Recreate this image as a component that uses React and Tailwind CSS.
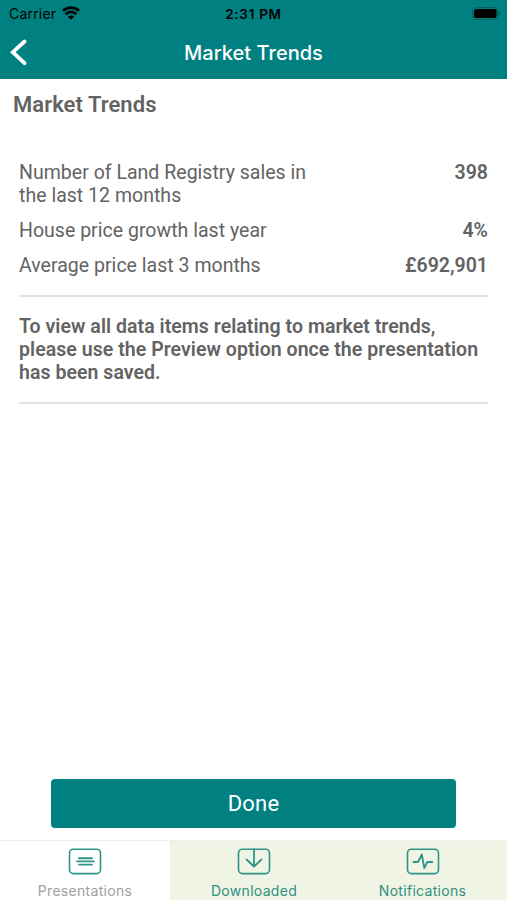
import React from 'react'

const stats = [
  { label: 'Number of Land Registry sales in the last 12 months', value: '398' },
  { label: 'House price growth last year', value: '4%' },
  { label: 'Average price last 3 months', value: '£692,901' },
]

function TabIcon({ children }) {
  return (
    <svg width="34" height="27" viewBox="0 0 34 27" fill="none" stroke="#2f9488" strokeWidth="1.6" strokeLinecap="round" strokeLinejoin="round">
      <rect x="1.5" y="1.2" width="31" height="24.4" rx="3.8" />
      {children}
    </svg>
  )
}

const tabs = [
  { label: 'Presentations', active: true, icon: <path d="M11 10.2h13M9.2 13.4h16.6M11 16.6h13" strokeWidth="1.9" /> },
  { label: 'Downloaded', icon: <path d="M17 1.2v17.2M9.5 11.5l7.5 7 7.5-7" strokeWidth="1.8" /> },
  { label: 'Notifications', icon: <path d="M7.5 14H12l3.8-7.5L18.3 20l3-6h5" strokeWidth="1.8" /> },
]

function StatusBar() {
  return (
    <div className="grid grid-cols-3 h-[27px] items-center text-black text-[14px] leading-[26px]">
      <div className="flex items-center pl-[9px] gap-[6px]">
        <span className="tracking-[0.2px]">Carrier</span>
        <svg width="18" height="14" viewBox="0 0 18 14" fill="none" stroke="#000" strokeWidth="2.7" className="-mt-0.5">
          <path d="M1 4.8a11.5 11.5 0 0 1 16 0M3.7 8.2a7.3 7.3 0 0 1 10.6 0" />
          <path d="M9 13.8 5.9 10.7a4.3 4.3 0 0 1 6.2 0z" fill="#000" stroke="none" />
        </svg>
      </div>
      <span className="pt-px text-center font-semibold text-[13.5px] tracking-[0.7px]">2:31 PM</span>
      <div className="flex justify-end pr-[6px]">
        <svg width="30" height="14" viewBox="0 0 30 14">
          <rect x="1.5" y="0.5" width="25" height="12" rx="3.5" fill="none" stroke="#005f5f" />
          <rect x="3" y="2" width="22.5" height="9" rx="2" fill="#000" />
          <path d="M27.8 4.5v4c1.8-.8 1.8-3.2 0-4z" fill="#005454" />
        </svg>
      </div>
    </div>
  )
}

export default function App() {
  return (
    <div className="flex flex-col h-[900px] w-full bg-white overflow-hidden font-['Roboto',sans-serif] text-[#636363]">
      {/* Header */}
      <header className="h-[79px] shrink-0 bg-[#008080] font-['Inter',sans-serif]">
        <StatusBar />
        <div className="grid grid-cols-[60px_1fr_60px] items-center h-[50px]">
          <button className="pl-[9px]" aria-label="Back">
            <svg width="18" height="28" viewBox="0 0 18 28" fill="none" stroke="#fff" strokeWidth="3.8" strokeLinecap="round">
              <path d="M15.5 3.5 3.8 14.2l11.7 11" />
            </svg>
          </button>
          <h1 className="pt-px text-center text-white text-[20px] font-medium tracking-[0.03px]">Market Trends</h1>
        </div>
      </header>

      {/* Content */}
      <main className="flex-1 flex flex-col">
        <h2 className="pl-[13px] pt-[12px] text-[22px] leading-[28px] font-semibold tracking-[0.05px]">Market Trends</h2>

        <div className="mx-[19px] mt-[42px] pb-[18px] border-b-2 border-[#e2e2e2] flex flex-col gap-[12px] text-[19.5px] leading-[23px]">
          {stats.map(({ label, value }) => (
            <div key={label} className="flex justify-between">
              <span className="w-[300px] tracking-[0.02px]">{label}</span>
              <span className="font-semibold">{value}</span>
            </div>
          ))}
        </div>

        <p className="mx-[19px] pt-[18px] pb-[18px] border-b-2 border-[#e2e2e2] text-[19.5px] leading-[23px] font-semibold tracking-[0.05px]">
          To view all data items relating to market trends,
          <br />
          please use the Preview option once the presentation
          <br />
          has been saved.
        </p>

        <button className="mt-auto mb-[12px] mx-[51px] h-[49px] rounded-[4px] bg-[#008080] text-white text-[22px] tracking-[0.2px]">
          Done
        </button>
      </main>

      {/* Tab bar */}
      <nav className="grid grid-cols-[170px_168px_169px] h-[60px] shrink-0 border-t border-[#eeeeee] font-['Inter',sans-serif]">
        {tabs.map(({ label, icon, active }) => (
          <button
            key={label}
            className={`flex flex-col items-center pt-[7px] text-[14px] leading-[20px] tracking-[0.3px] ${
              active ? 'bg-white text-[#a0a0a0]' : 'bg-[#f0f4e4] text-[#2f9080]'
            }`}
          >
            <TabIcon>{icon}</TabIcon>
            <span className="mt-[6px]">{label}</span>
          </button>
        ))}
      </nav>
    </div>
  )
}
